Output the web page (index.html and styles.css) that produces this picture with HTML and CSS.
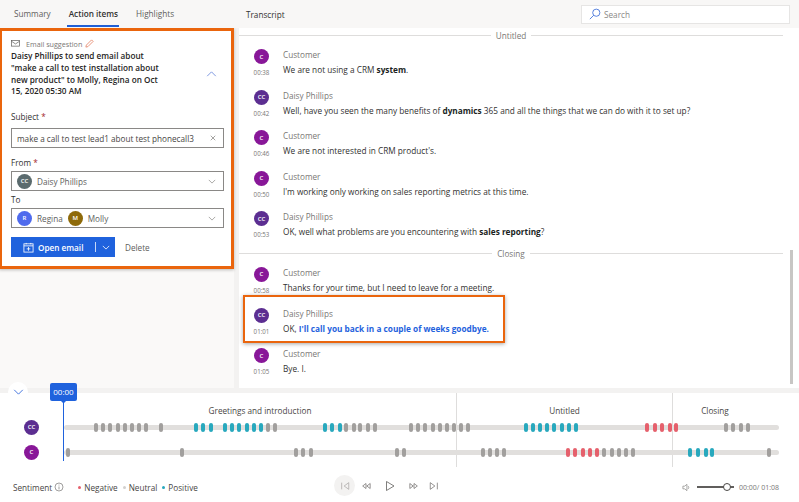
FILE: index.html
```html
<!DOCTYPE html>
<html lang="en">
<head>
<meta charset="utf-8">
<title>Conversation summary</title>
<link rel="stylesheet" href="styles.css">
</head>
<body>
<div class="app">
  <header class="topbar">
    <nav class="tabs">
      <span class="tab">Summary</span>
      <span class="tab active">Action items</span>
      <span class="tab">Highlights</span>
    </nav>
    <span class="transcript-title">Transcript</span>
    <div class="search">
      <svg class="search-icon" viewBox="0 0 14 14"><circle cx="8.5" cy="5.5" r="4.2"/><path d="M5.5 8.5L1 13"/></svg>
      <span>Search</span>
    </div>
  </header>

  <main class="main">
    <aside class="left">
      <section class="card">
        <div class="card-kicker">
          <svg class="mail" viewBox="0 0 10 8"><rect x="0.5" y="0.5" width="9" height="6.5"/><path d="M0.5 1.5L5 4.5L9.5 1.5"/></svg>
          <span>Email suggestion</span>
          <svg class="pencil" viewBox="0 0 10 10"><path d="M1 9L1.5 6.8L7.3 1L9 2.7L3.2 8.5Z"/></svg>
        </div>
        <div class="card-head">
          <p class="card-title">Daisy Phillips to send email about "make a call to test installation about new product" to Molly, Regina on Oct 15, 2020 05:30 AM</p>
          <svg class="chev-up" viewBox="0 0 12 7"><path d="M1 6L6 1L11 6"/></svg>
        </div>
        <label class="field-label first">Subject <b>*</b></label>
        <div class="input subject">
          <span class="input-text">make a call to test lead1 about test phonecall3</span>
          <svg class="x" viewBox="0 0 8 8"><path d="M1 1L7 7M7 1L1 7"/></svg>
        </div>
        <label class="field-label">From <b>*</b></label>
        <div class="input">
          <span class="chip"><span class="av gray">CC</span>Daisy Phillips</span>
          <svg class="chev-down" viewBox="0 0 10 6"><path d="M1 1L5 5L9 1"/></svg>
        </div>
        <label class="field-label to">To</label>
        <div class="input">
          <span class="chip"><span class="av blue">R</span>Regina</span>
          <span class="chip"><span class="av brown">M</span>Molly</span>
          <svg class="chev-down" viewBox="0 0 10 6"><path d="M1 1L5 5L9 1"/></svg>
        </div>
        <div class="actions">
          <button class="primary">
            <svg class="cal" viewBox="0 0 12 12"><rect x="1" y="2" width="10" height="9"/><path d="M1 4.2H11M6 5.5V9.5M4 7.5H8M3.5 1V2.5M8.5 1V2.5"/></svg>
            <span>Open email</span>
            <i class="sep"></i>
            <svg class="chev-w" viewBox="0 0 10 6"><path d="M1 1L5 5L9 1"/></svg>
          </button>
          <span class="delete">Delete</span>
        </div>
      </section>
    </aside>

    <section class="transcript">
      <div class="divider"><span>Untitled</span></div>
      <div class="msg"><div class="who"><span class="av c">C</span><time>00:38</time></div><div class="body"><div class="name">Customer</div><p>We are not using a CRM <b>system</b>.</p></div></div>
      <div class="msg"><div class="who"><span class="av d">CC</span><time>00:42</time></div><div class="body"><div class="name">Daisy Phillips</div><p>Well, have you seen the many benefits of <b>dynamics</b> 365 and all the things that we can do with it to set up?</p></div></div>
      <div class="msg"><div class="who"><span class="av c">C</span><time>00:46</time></div><div class="body"><div class="name">Customer</div><p>We are not interested in CRM product's.</p></div></div>
      <div class="msg"><div class="who"><span class="av c">C</span><time>00:50</time></div><div class="body"><div class="name">Customer</div><p>I'm working only working on sales reporting metrics at this time.</p></div></div>
      <div class="msg"><div class="who"><span class="av d">CC</span><time>00:53</time></div><div class="body"><div class="name">Daisy Phillips</div><p>OK, well what problems are you encountering with <b>sales reporting</b>?</p></div></div>
      <div class="divider closing"><span>Closing</span></div>
      <div class="msg"><div class="who"><span class="av c">C</span><time>00:58</time></div><div class="body"><div class="name">Customer</div><p>Thanks for your time, but I need to leave for a meeting.</p></div></div>
      <div class="msg hl"><div class="who"><span class="av d">CC</span><time>01:01</time></div><div class="body"><div class="name">Daisy Phillips</div><p>OK, <b class="link">I'll call you back in a couple of weeks goodbye.</b></p></div></div>
      <div class="msg"><div class="who"><span class="av c">C</span><time>01:05</time></div><div class="body"><div class="name">Customer</div><p>Bye. I.</p></div></div>
      <i class="scroll-thumb"></i>
    </section>
  </main>

  <footer class="player">
    <button class="collapse"><svg viewBox="0 0 12 7"><path d="M1 1L6 6L11 1"/></svg></button>
    <div class="timeline">
      <div class="segments">
        <div class="seg s1">Greetings and introduction</div>
        <div class="seg s2">Untitled</div>
        <div class="seg s3">Closing</div>
      </div>
      <div class="lane lane-cc">
        <span class="av d">CC</span>
        <div class="track">
          <i class="k g" style="left:32px"></i><i class="k g" style="left:39px"></i><i class="k g" style="left:46px"></i><i class="k g" style="left:53.5px"></i><i class="k g" style="left:60.5px"></i><i class="k g" style="left:68px"></i><i class="k g" style="left:75px"></i><i class="k g" style="left:82px"></i><i class="k g" style="left:97px"></i>
          <i class="k t" style="left:132px"></i><i class="k t" style="left:139px"></i><i class="k t" style="left:147px"></i>
          <i class="k t" style="left:160.5px"></i><i class="k t" style="left:167.5px"></i><i class="k t" style="left:175px"></i><i class="k t" style="left:182.5px"></i><i class="k t" style="left:189.5px"></i><i class="k t" style="left:197px"></i>
          <i class="k g" style="left:204px"></i><i class="k g" style="left:211px"></i>
          <i class="k t" style="left:261px"></i><i class="k t" style="left:268px"></i><i class="k t" style="left:276px"></i>
          <i class="k g" style="left:282px"></i><i class="k g" style="left:289.5px"></i><i class="k g" style="left:296px"></i><i class="k g" style="left:303.5px"></i><i class="k g" style="left:311px"></i>
          <i class="k g" style="left:347px"></i><i class="k g" style="left:354px"></i><i class="k g" style="left:361px"></i><i class="k g" style="left:369px"></i><i class="k g" style="left:376px"></i><i class="k g" style="left:383px"></i><i class="k g" style="left:390px"></i><i class="k g" style="left:397px"></i><i class="k g" style="left:404px"></i>
          <i class="k t" style="left:461.5px"></i><i class="k t" style="left:468.5px"></i><i class="k t" style="left:475.5px"></i><i class="k t" style="left:483px"></i><i class="k t" style="left:490px"></i><i class="k t" style="left:497.5px"></i><i class="k t" style="left:505px"></i><i class="k t" style="left:512px"></i>
          <i class="k r" style="left:583px"></i><i class="k r" style="left:590.5px"></i><i class="k r" style="left:598px"></i><i class="k r" style="left:605.5px"></i><i class="k r" style="left:612px"></i>
          <i class="k g" style="left:662px"></i><i class="k g" style="left:669px"></i><i class="k g" style="left:676.5px"></i><i class="k g" style="left:684px"></i>
        </div>
      </div>
      <div class="lane lane-c">
        <span class="av c">C</span>
        <div class="track">
          <i class="k g" style="left:4px"></i><i class="k g" style="left:118px"></i>
          <i class="k g" style="left:232px"></i><i class="k g" style="left:239px"></i><i class="k g" style="left:247px"></i>
          <i class="k g" style="left:333px"></i><i class="k g" style="left:340px"></i>
          <i class="k g" style="left:418.5px"></i><i class="k g" style="left:426px"></i><i class="k g" style="left:433px"></i><i class="k g" style="left:440px"></i>
          <i class="k r" style="left:504px"></i><i class="k r" style="left:511px"></i><i class="k r" style="left:518.5px"></i><i class="k r" style="left:526px"></i><i class="k r" style="left:533px"></i>
          <i class="k g" style="left:540px"></i><i class="k g" style="left:548px"></i><i class="k g" style="left:555px"></i><i class="k g" style="left:562px"></i><i class="k g" style="left:569px"></i>
          <i class="k t" style="left:626px"></i><i class="k t" style="left:633.5px"></i><i class="k t" style="left:641.5px"></i><i class="k t" style="left:648px"></i>
          <i class="k g" style="left:704.5px"></i>
        </div>
      </div>
      <div class="playhead"><span>00:00</span></div>
    </div>
    <div class="controls">
      <div class="legend">
        <span class="sent">Sentiment</span>
        <svg class="info" viewBox="0 0 10 10"><circle cx="5" cy="5" r="4"/><path d="M5 4.5V7.4M5 2.6V3.5"/></svg>
        <span class="lg"><i class="dot neg"></i>Negative</span>
        <span class="lg"><i class="dot neu"></i>Neutral</span>
        <span class="lg"><i class="dot pos"></i>Positive</span>
      </div>
      <div class="transport">
        <span class="tbtn first-btn"><svg viewBox="0 0 12 12"><path d="M2 2V10M10.5 2L5 6L10.5 10Z"/></svg></span>
        <span class="tbtn prev"><svg viewBox="0 0 12 12"><path d="M6 3L2 6L6 9ZM11 3L7 6L11 9Z"/></svg></span>
        <span class="tbtn play"><svg viewBox="0 0 12 12"><path d="M2.5 1.5L10 6L2.5 10.5Z"/></svg></span>
        <span class="tbtn"><svg viewBox="0 0 12 12"><path d="M1 3L5 6L1 9ZM6 3L10 6L6 9Z"/></svg></span>
        <span class="tbtn last"><svg viewBox="0 0 12 12"><path d="M1.5 2L7 6L1.5 10ZM10 2V10"/></svg></span>
      </div>
      <div class="volume">
        <svg class="spk" viewBox="0 0 10 10"><path d="M1 3.5H3L5.5 1.5V8.5L3 6.5H1ZM7 3.5Q8 5 7 6.5"/></svg>
        <div class="slider"><i class="knob"></i></div>
        <span class="clock">00:00/ 01:08</span>
      </div>
    </div>
  </footer>
</div>
</body>
</html>
```
FILE: styles.css
```css
*, *::before, *::after { box-sizing: border-box; }
html, body { margin: 0; height: 100%; overflow: hidden; }
body {
  font-family: "Open Sans", "Noto Sans", sans-serif;
  font-size: 8.2px;
  color: #323130;
  background: #f3f2f1;
}
p { margin: 0; }
svg { display: block; fill: none; stroke: currentColor; }
.app { width: 799px; height: 502px; display: flex; flex-direction: column; }

.topbar { height: 28px; display: flex; align-items: center; position: relative; background: #f8f7f6; flex: none; }
.tabs { width: 246px; height: 28px; display: flex; padding-left: 14px; gap: 18px; flex: none; }
.tab { line-height: 28px; color: #605e5c; height: 28px; }
.tab.active { color: #323130; font-weight: 600; position: relative; }
.tab.active::after { content: ""; position: absolute; left: -2px; right: -1px; bottom: 1px; height: 2px; background: #1f5fd6; }
.transcript-title { color: #323130; }
.search {
  margin-left: auto; margin-right: 9px; width: 209px; height: 19px;
  background: #fff; border: 1px solid #e6e5e4;
  display: flex; align-items: center; gap: 3px; padding-left: 7px; color: #8a8886;
}
.search-icon { width: 12px; height: 12px; color: #3f6fd8; stroke-width: 1; }

.main { height: 360px; display: flex; gap: 5px; flex: none; }
.left { width: 234px; background: #faf9f8; flex: none; }
.card {
  width: 235px; margin-left: -1px; height: 241px; background: #fff; border: 3px solid #ea650d;
  padding: 6px 7px 0 9px; box-shadow: 0 1px 3px rgba(0,0,0,.25);
}
.card-kicker { display: flex; align-items: center; height: 13px; color: #797775; font-size: 7.2px; }
.mail { width: 9px; height: 7px; color: #605e5c; margin-right: 6px; stroke-width: .8; }
.pencil { width: 9px; height: 9px; margin-left: 3px; color: #e58b70; stroke-width: 1; }
.card-head { display: flex; align-items: center; justify-content: space-between; }
.card-title { width: 155px; font-weight: 600; line-height: 11.8px; color: #252423; }
.chev-up { width: 11px; height: 6px; color: #6b89dc; margin-right: 7px; }
.field-label { display: block; line-height: 12px; margin-top: 9px; color: #323130; }
.field-label.first { margin-top: 14px; }
.field-label.to { margin-top: 3px; }
.field-label b { color: #a4262c; font-weight: 400; }
.input {
  height: 20px; border: 1px solid #8a8886; margin-top: 2px; display: flex; align-items: center;
  padding: 0 7px 0 5px; gap: 5px; position: relative; color: #605e5c; white-space: nowrap;
}
.input.subject { margin-top: 5px; }
.input-text { color: #484644; }
.x { width: 6px; height: 6px; margin-left: auto; color: #797775; stroke-width: .9; flex: none; }
.chev-down { width: 8px; height: 5px; margin-left: auto; color: #8a8886; stroke-width: .9; flex: none; }
.chip { display: flex; align-items: center; gap: 5px; }
.av {
  width: 15px; height: 15px; border-radius: 50%; display: flex; align-items: center; justify-content: center;
  color: #fff; font-size: 6px; font-weight: 600; flex: none;
}
.av.gray { background: #5b6b6e; }
.av.blue { background: #4f6bed; }
.av.brown { background: #8e6a0a; }
.av.c { background: #881798; }
.av.d { background: #5c2e91; }
.actions { display: flex; align-items: center; margin-top: 9px; }
.primary {
  width: 104px; height: 20px; background: #1f62dd; color: #fff; border: 0; padding: 0 5px 0 12px;
  display: flex; align-items: center; font: 600 8.2px "Open Sans", sans-serif; white-space: nowrap;
}
.cal { width: 11px; height: 11px; margin-right: 4px; stroke-width: .9; flex: none; }
.sep { width: 1px; height: 10px; background: #c7d8f7; margin-left: 12px; flex: none; }
.chev-w { width: 8px; height: 5px; margin-left: 6px; stroke-width: 1; flex: none; }
.delete { margin-left: 10px; color: #605e5c; }

.transcript { width: 560px; background: #fff; position: relative; }
.divider { height: 15px; display: flex; align-items: center; color: #797775; }
.divider::before, .divider::after { content: ""; height: 1px; background: #dedddc; flex: 1; }
.divider span { padding: 0 5px; }
.divider::after { margin-right: 16px; }
.divider.closing { margin-top: 1px; height: 14px; }
.msg { height: 40.6px; display: flex; position: relative; padding-left: 15px; padding-top: 5px; }
.msg.hl { z-index: 1; }
.msg.hl::before {
  content: ""; position: absolute; left: 4px; top: -7px; width: 262px; height: 48px;
  border: 2px solid #ea650d; box-shadow: 0 1px 4px rgba(0,0,0,.35); background: #fff; z-index: -1;
}
.who { width: 15px; margin-right: 14px; display: flex; flex-direction: column; align-items: center; padding-top: 1px; }
time { font-size: 6.2px; color: #797775; margin-top: 4px; white-space: nowrap; }
.name { color: #797775; line-height: 14px; }
.body p { line-height: 15px; color: #323130; white-space: nowrap; font-size: 8.25px; }
.body b { font-weight: 700; color: #201f1e; }
.body b.link { color: #1f62dd; }
.scroll-thumb { position: absolute; right: 6px; top: 222px; width: 3px; height: 134px; background: #c8c6c4; }

.player { height: 109px; margin-top: 5px; background: #fff; position: relative; flex: none; display: flex; flex-direction: column; }
.collapse {
  position: absolute; left: 8px; top: -11px; width: 20px; height: 20px; border-radius: 50%; background: #fff; border: 0;
  padding: 0; display: flex; align-items: center; justify-content: center; color: #2b62d9; z-index: 3;
}
.collapse svg { width: 11px; height: 6px; stroke-width: 1; }
.timeline { height: 75px; position: relative; flex: none; }
.segments { position: absolute; left: 64px; top: 0; height: 74px; display: flex; color: #484644; }
.seg { padding-top: 11px; text-align: center; line-height: 13px; }
.s1 { width: 392px; }
.s2 { width: 216px; border-left: 1px solid #dedddc; }
.s3 { width: 107px; border-left: 1px solid #dedddc; padding-right: 22px; }
.lane { position: absolute; left: 24px; right: 20px; height: 16px; display: flex; align-items: center; }
.lane-cc { top: 26px; }
.lane-c { top: 51px; }
.track { position: absolute; left: 40px; right: 0; top: 6px; height: 5px; background: #e1dfdd; border-radius: 3px; }
.k { position: absolute; top: -2px; width: 4px; height: 9px; border-radius: 2px; margin-left: -2px; }
.k.g { background: #a19f9d; }
.k.t { background: #28a8bd; }
.k.r { background: #e5606c; }
.playhead { position: absolute; left: 50px; top: -10px; z-index: 2; }
.playhead span {
  display: block; width: 27px; height: 18px; background: #1f62dd; color: #fff; border-radius: 2px; text-align: center;
  line-height: 18px; font-size: 8px;
}
.playhead::before {
  content: ""; position: absolute; left: 10.5px; top: 18px; width: 5px; height: 2.5px;
  border-left: 2.5px solid transparent; border-right: 2.5px solid transparent; border-top: 2.5px solid #1f62dd;
}
.playhead::after { content: ""; position: absolute; left: 12.5px; top: 18px; width: 1.5px; height: 60px; background: #1f62dd; }
.controls { height: 34px; display: flex; align-items: center; position: relative; padding: 4px 20px 0 13px; }
.legend { display: flex; align-items: center; color: #484644; }
.info { width: 10px; height: 10px; margin: 0 14px 0 2px; stroke-width: .6; color: #605e5c; }
.lg { display: flex; align-items: center; margin-right: 5px; }
.dot { width: 3px; height: 3px; border-radius: 50%; margin-right: 3px; }
.neg { background: #e5606c; }
.neu { background: #d2d0ce; }
.pos { background: #28a8bd; }
.transport { position: absolute; left: 334px; top: 7px; display: flex; align-items: center; color: #605e5c; }
.tbtn { width: 23.5px; height: 21px; display: flex; align-items: center; justify-content: center; }
.tbtn svg { width: 10px; height: 10px; stroke-width: .8; }
.first-btn { background: #f3f2f1; border-radius: 50%; width: 21px; color: #a19f9d; }
.prev { margin-left: -1px; margin-right: 1px; }
.last { margin-left: -3px; }
.play svg { width: 12px; height: 12px; }
.volume { margin-left: auto; display: flex; align-items: center; color: #797775; font-size: 7px; }
.spk { width: 9px; height: 9px; stroke-width: .7; margin-right: 6px; }
.slider { width: 37px; height: 1.5px; background: #605e5c; position: relative; margin-right: 5px; }
.knob { position: absolute; right: 3px; top: -3.5px; width: 8px; height: 8px; border: 1.2px solid #484644; background: #fff; border-radius: 50%; }
```
